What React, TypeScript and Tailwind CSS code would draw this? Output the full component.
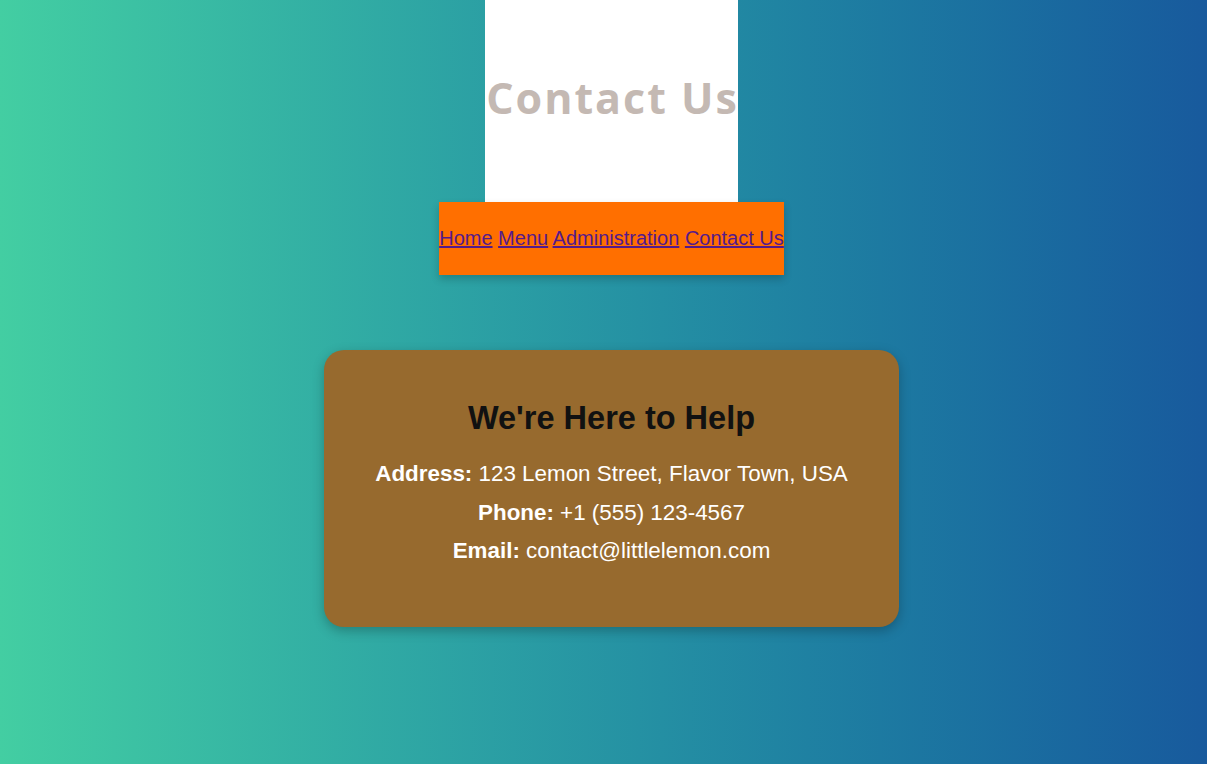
export default function App() {
  const links = ["Home", "Menu", "Administration", "Contact Us"];

  return (
    <div className="min-h-[764px] bg-gradient-to-r from-[#43cea2] to-[#185a9d] pl-4 font-['Liberation_Sans',Arial,sans-serif]">
      <div className="flex flex-col items-center">
        {/* Header */}
        <div className="flex h-[202px] w-[253px] items-center justify-center bg-white pb-[6px]">
          <h1 className="whitespace-nowrap pl-[2px] font-['Open_Sans',sans-serif] text-[43px] font-bold tracking-[2px] text-[#c4b9b3]">
            Contact Us
          </h1>
        </div>

        {/* Nav */}
        <nav className="flex h-[73px] items-center bg-[#ff6f00] shadow-[0_4px_8px_rgba(0,0,0,0.2)]">
          <p className="text-[20px] leading-[23px]">
            {links.map((l, i) => (
              <span key={l}>
                <a href="#" className="text-[#551a8b] underline">
                  {l}
                </a>
                {i < links.length - 1 ? " " : ""}
              </span>
            ))}
          </p>
        </nav>

        {/* Contact card */}
        <div className="mt-[75px] h-[277px] w-[575px] rounded-[20px] bg-[#976a2e] pt-[50px] text-center shadow-[0_4px_12px_rgba(0,0,0,0.25)]">
          <h2 className="text-[32.5px] font-bold leading-[37px] text-[#111]">We're Here to Help</h2>
          <div className="mt-[18px] text-[22.4px] leading-[38.7px] text-white">
            <p>
              <strong>Address:</strong> 123 Lemon Street, Flavor Town, USA
            </p>
            <p>
              <strong>Phone:</strong> +1 (555) 123-4567
            </p>
            <p>
              <strong>Email:</strong> contact@littlelemon.com
            </p>
          </div>
        </div>
      </div>
    </div>
  );
}
